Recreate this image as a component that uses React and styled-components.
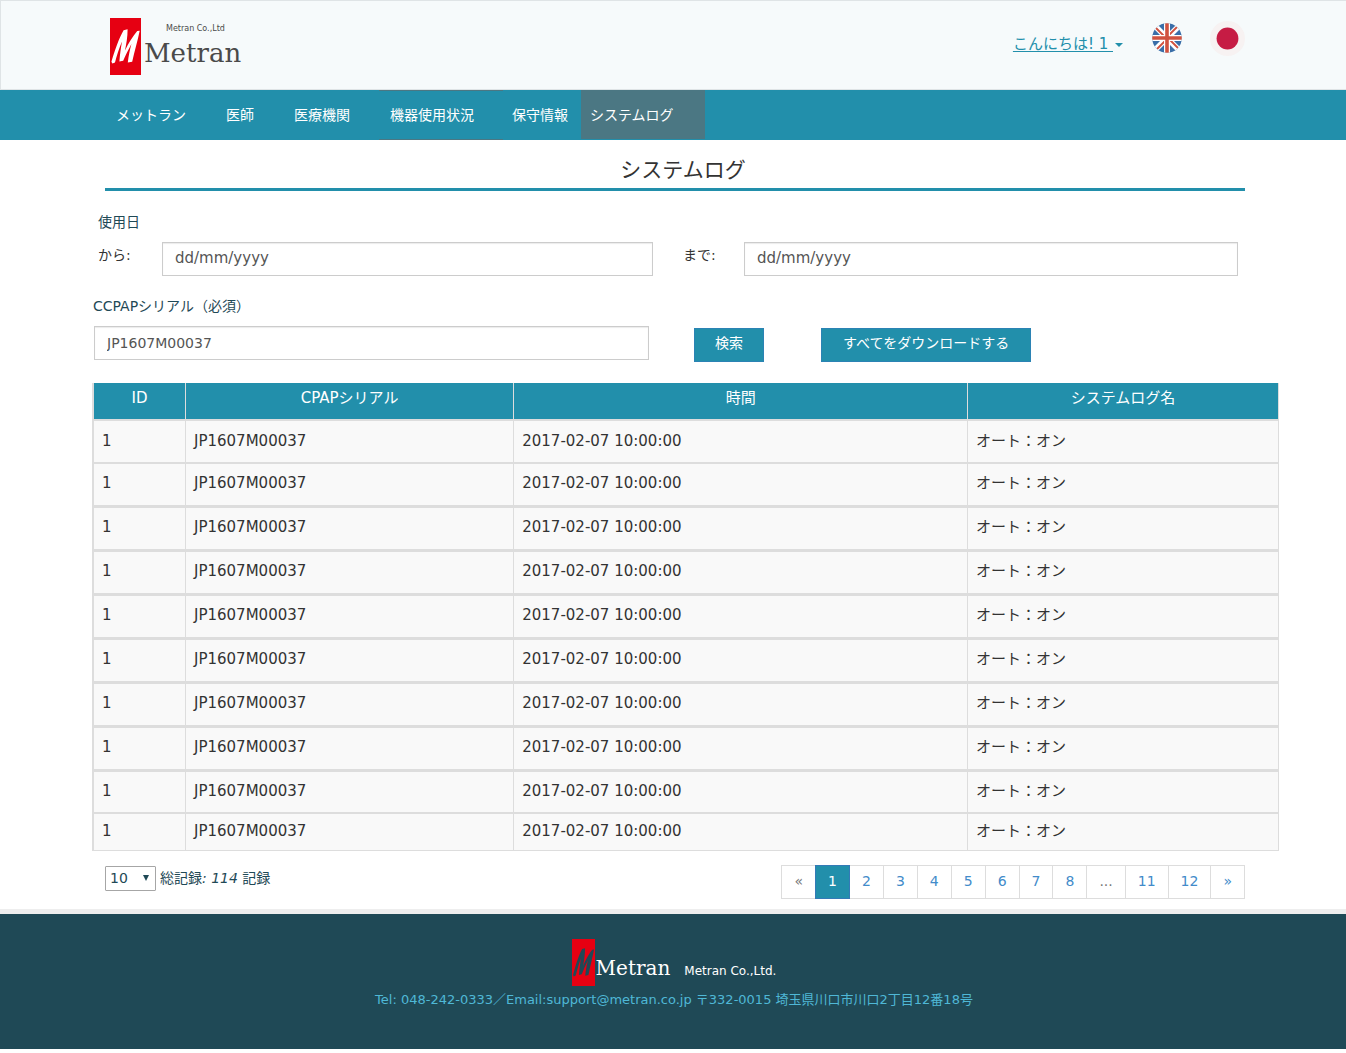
import React, { useState } from "react";
import styled, { createGlobalStyle } from "styled-components";

const teal = "#228fab";
const slate = "#4b7783";
const deep = "#1f4956";
const line = "#dddddd";

const GlobalStyle = createGlobalStyle`
  *, *::before, *::after { box-sizing: border-box; }
  body {
    margin: 0;
    background: #fff;
    color: ${deep};
    font: 14px/20px "DejaVu Sans", "Noto Sans CJK JP", sans-serif;
  }
  button, input, select { font: inherit; }
`;

const Header = styled.header`
  display: flex;
  justify-content: space-between;
  align-items: flex-start;
  padding: 17px 101px 14px 109px;
  background: #f6fafb;
  border: 1px solid #dfe4e6;
  border-right: 0;
`;

const Brand = styled.a`
  display: flex;
  gap: 3px;
  text-decoration: none;
  color: #4a4a4a;
`;

const BrandText = styled.span`
  display: flex;
  flex-direction: column;
  padding-top: 4px;
`;

const BrandCompany = styled.small`
  font-size: 8px;
  line-height: 14px;
  padding-left: 22px;
`;

const Wordmark = styled.span`
  font-family: "DejaVu Serif", serif;
  font-size: ${(p) => p.$size}px;
  line-height: 34px;
`;

const Account = styled.div`
  display: flex;
  align-items: center;
  height: 40px;
`;

const Greeting = styled.a`
  display: flex;
  align-items: center;
  gap: 2px;
  margin: 12px 29px 0 0;
  font-size: 15px;
  line-height: 22px;
  color: ${teal};
  text-decoration: none;
  span { text-decoration: underline; white-space: pre; text-underline-offset: 2px; }
`;

const Caret = styled.i`
  margin-top: 2px;
  border: 4px solid transparent;
  border-top-color: currentColor;
  border-bottom: 0;
`;

const Flag = styled.button`
  display: flex;
  padding: 0;
  border: 0;
  background: none;
  & + & { margin-left: 28px; }
`;

const Nav = styled.nav`
  display: flex;
  padding: 0 101px 0 105px;
  background: ${teal};
`;

const NavItem = styled.a`
  padding: 14px ${(p) => p.$right}px 14px ${(p) => p.$left}px;
  border: 1px solid ${(p) => (p.$state ? slate : teal)};
  border-width: 1px 0;
  margin-bottom: ${(p) => (p.$state === "active" ? 1 : 0)}px;
  padding-bottom: ${(p) => (p.$state === "active" ? 13 : 14)}px;
  background: ${(p) => (p.$state === "active" ? slate : teal)};
  color: #fff;
  text-decoration: none;
  white-space: nowrap;
`;

const Main = styled.main`
  padding: 15px 101px 10px 105px;
`;

const Title = styled.h1`
  margin: 0 0 21px;
  padding: 0 0 3px 16px;
  border-bottom: 3px solid ${teal};
  color: #333;
  font-size: 21px;
  font-weight: 400;
  line-height: 30px;
  text-align: center;
`;

const DateRange = styled.fieldset`
  display: flex;
  gap: 30px;
  min-width: 0;
  margin: 0 7px 20px -7px;
  padding: 0;
  border: 0;
`;

const Legend = styled.legend`
  padding: 0;
  margin-bottom: 10px;
`;

const DateField = styled.label`
  display: flex;
  flex: 1;
  color: #333;
`;

const DateLabel = styled.span`
  flex: none;
  width: ${(p) => p.$width}px;
  padding-top: 3px;
`;

const TextBox = styled.input`
  flex: 1;
  min-width: 0;
  width: 100%;
  height: 34px;
  padding: 6px 12px;
  border: 1px solid #ccc;
  box-shadow: inset 0 1px 1px rgba(0, 0, 0, 0.08);
  border-radius: 0;
  background: #fff;
  color: #555;
  font-size: 14px;
  &::placeholder { color: #555; opacity: 1; }
`;

const DateBox = styled(TextBox)`
  padding: 5px 12px 7px;
  font-size: 15px;
`;

const Wide = styled.div`
  margin: 0 -34px 0 -13px;
`;

const SearchLabel = styled.label`
  display: block;
  padding-left: 1px;
  margin-bottom: 10px;
`;

const SearchRow = styled.form`
  display: flex;
  align-items: flex-end;
  padding-left: 2px;
  margin-bottom: 21px;
`;

const SerialBox = styled.div`
  flex: 0 1 555px;
  padding-bottom: 2px;
  display: flex;
`;

const Button = styled.button`
  height: 34px;
  margin-left: ${(p) => p.$gap}px;
  padding: 4px ${(p) => p.$pad}px 8px;
  border: 1px solid #2b83b4;
  background: ${teal};
  color: #fff;
  white-space: nowrap;
`;

const Table = styled.table`
  width: 100%;
  table-layout: fixed;
  border-collapse: separate;
  border-spacing: 0;
  border-left: 2px solid ${line};
  color: #333;
  font-size: 15px;
  line-height: 22px;
`;

const Th = styled.th`
  width: ${(p) => p.$width};
  height: 38px;
  padding: 4px 8px 0;
  border: solid ${line};
  border-width: 0 1px 2px 0;
  background: ${teal};
  color: #fff;
  font-weight: 400;
  vertical-align: top;
`;

const Td = styled.td`
  height: 44px;
  padding: 8px 8px 0;
  border: solid ${line};
  border-width: 0 1px 3px 0;
  background: #f9f9f9;
  vertical-align: top;

  tr:first-child & { height: 43px; padding-top: 9px; border-bottom-width: 2px; }
  tr:nth-last-child(2) & { height: 42px; border-bottom-width: 2px; }
  tr:last-child & { height: 37px; padding-top: 6px; border-bottom-width: 1px; }
`;

const TableFooter = styled.div`
  display: flex;
  justify-content: space-between;
  align-items: flex-start;
  margin-top: 14px;
`;

const Count = styled.div`
  display: flex;
  align-items: flex-start;
  gap: 4px;
  padding-top: 1px;
`;

const CountText = styled.span`
  line-height: 24px;
`;

const SelectWrap = styled.span`
  position: relative;
  display: flex;
  svg { position: absolute; right: 7px; top: 9px; pointer-events: none; }
`;

const Select = styled.select`
  width: 51px;
  height: 25px;
  padding: 0 4px 2px;
  border: 1px solid #a6a6a6;
  border-radius: 1px;
  appearance: none;
  background: #fff;
  color: ${deep};
`;

const Pages = styled.ul`
  display: flex;
  margin: 0;
  padding: 0;
  list-style: none;
  li + li { margin-left: -1px; }
`;

const PageLink = styled.a`
  position: relative;
  z-index: ${(p) => (p.$active ? 1 : 0)};
  display: block;
  padding: 5px 12px 7px;
  border: 1px solid ${(p) => (p.$active ? "#337ab7" : line)};
  background: ${(p) => (p.$active ? teal : "#fff")};
  color: ${(p) => (p.$active ? "#fff" : p.$muted ? "#777" : "#428bca")};
  text-decoration: none;
`;

const Footer = styled.footer`
  display: flex;
  flex-direction: column;
  align-items: center;
  padding: 25px 0 39px;
  border-top: 5px solid #eee;
  background: ${deep};
`;

const FooterBrand = styled.div`
  display: flex;
  align-items: flex-start;
  gap: 1px;
  padding-left: 2px;
  color: #fff;
`;

const FooterWordmark = styled(Wordmark)`
  padding-top: 12px;
`;

const FooterCompany = styled.span`
  padding: 22px 0 0 13px;
  font-size: 12px;
`;

const Contact = styled.p`
  margin: 4px 0 0;
  padding-left: 2px;
  color: #4fb8d6;
  font-size: 13px;
`;

function LogoMark({ width, height, stroke }) {
  return (
    <svg width={width} height={height} viewBox="0 0 31 57" preserveAspectRatio="none" aria-hidden="true">
      <rect width="31" height="57" fill="#e60012" />
      <path
        d="M1.4 43.800 C4.500 33 9 20 13.600 12.200 L17.600 11.200 C17.600 19 16.300 26 15 32.500 C18.200 25.500 22.600 18.500 27.200 13 L29.700 12.800 C27.600 23 24.400 33.500 22.200 43.800 L17.800 44.600 C18.600 37.500 19.900 31.500 21.400 26 C18.500 31.500 15.600 37 13.200 42.800 L9.400 43.600 C9.900 36 11 29.500 12 23.500 C9 30.500 6.800 37.500 5 44.400 L2.400 45.400 Z"
        fill={stroke}
      />
    </svg>
  );
}

function UnitedKingdomFlag() {
  return (
    <svg width="30" height="30" viewBox="0 0 30 30" aria-hidden="true">
      <clipPath id="uk-round">
        <circle cx="15" cy="15" r="14.800" />
      </clipPath>
      <g clipPath="url(#uk-round)">
        <rect width="30" height="30" fill="#3a6ea8" />
        <path d="M2 2 28 28M28 2 2 28" stroke="#fff" strokeWidth="5.600" />
        <path d="M4 5 13 14M25 4 16 13M5 26 14 17M26 25 17 16" stroke="#d0523f" strokeWidth="1.800" />
        <path d="M15 0V30M0 15H30" stroke="#fff" strokeWidth="6" />
        <path d="M15 0V30M0 15H30" stroke="#d0523f" strokeWidth="3.600" />
      </g>
    </svg>
  );
}

function JapanFlag() {
  return (
    <svg width="35" height="35" viewBox="0 0 35 35" aria-hidden="true">
      <circle cx="17.500" cy="17.500" r="17.500" fill="#f7f2f2" />
      <circle cx="17.500" cy="17.500" r="10.900" fill="#c61c44" />
    </svg>
  );
}

const navItems = [
  { text: "メットラン", left: 11, right: 29 },
  { text: "医師", left: 11, right: 29 },
  { text: "医療機関", left: 11, right: 29 },
  { text: "機器使用状況", left: 11, right: 29, state: "open" },
  { text: "保守情報", left: 9, right: 13 },
  { text: "システムログ", left: 9, right: 31, state: "active" },
];

const columns = [
  { text: "ID", width: "92px" },
  { text: "CPAPシリアル", width: "27.7%" },
  { text: "時間", width: "38.3%" },
  { text: "システムログ名" },
];

const rows = Array.from({ length: 10 }, () => ["1", "JP1607M00037", "2017-02-07 10:00:00", "オート：オン"]);

const pages = ["«", "1", "2", "3", "4", "5", "6", "7", "8", "...", "11", "12", "»"];

export default function App() {
  const [serial, setSerial] = useState("JP1607M00037");
  const [from, setFrom] = useState("");
  const [to, setTo] = useState("");

  return (
    <>
      <GlobalStyle />
      <Header>
        <Brand href="#">
          <LogoMark width={31} height={57} stroke="#fff" />
          <BrandText>
            <BrandCompany>Metran Co.,Ltd</BrandCompany>
            <Wordmark $size={26}>Metran</Wordmark>
          </BrandText>
        </Brand>
        <Account>
          <Greeting href="#">
            <span>こんにちは! 1 </span>
            <Caret />
          </Greeting>
          <Flag type="button" aria-label="English">
            <UnitedKingdomFlag />
          </Flag>
          <Flag type="button" aria-label="日本語">
            <JapanFlag />
          </Flag>
        </Account>
      </Header>

      <Nav>
        {navItems.map((item) => (
          <NavItem key={item.text} href="#" $left={item.left} $right={item.right} $state={item.state}>
            {item.text}
          </NavItem>
        ))}
      </Nav>

      <Main>
        <Title>システムログ</Title>

        <DateRange>
          <Legend>使用日</Legend>
          <DateField>
            <DateLabel $width={64}>から:</DateLabel>
            <DateBox placeholder="dd/mm/yyyy" value={from} onChange={(e) => setFrom(e.target.value)} />
          </DateField>
          <DateField>
            <DateLabel $width={61}>まで:</DateLabel>
            <DateBox placeholder="dd/mm/yyyy" value={to} onChange={(e) => setTo(e.target.value)} />
          </DateField>
        </DateRange>

        <Wide>
          <SearchLabel htmlFor="serial">CCPAPシリアル（必須）</SearchLabel>
          <SearchRow onSubmit={(e) => e.preventDefault()}>
            <SerialBox>
              <TextBox id="serial" value={serial} onChange={(e) => setSerial(e.target.value)} />
            </SerialBox>
            <Button type="submit" $gap={45} $pad={20}>検索</Button>
            <Button type="button" $gap={57} $pad={21}>すべてをダウンロードする</Button>
          </SearchRow>

          <Table>
            <thead>
              <tr>
                {columns.map((c) => (
                  <Th key={c.text} scope="col" $width={c.width}>{c.text}</Th>
                ))}
              </tr>
            </thead>
            <tbody>
              {rows.map((row, i) => (
                <tr key={i}>
                  {row.map((cell) => (
                    <Td key={cell}>{cell}</Td>
                  ))}
                </tr>
              ))}
            </tbody>
          </Table>
        </Wide>

        <TableFooter>
          <Count>
            <SelectWrap>
              <Select aria-label="表示件数" defaultValue="10">
                <option>10</option>
                <option>20</option>
                <option>50</option>
              </Select>
              <svg width="6" height="6" viewBox="0 0 6 6" aria-hidden="true">
                <path d="M0 0H6L3 6Z" fill={deep} />
              </svg>
            </SelectWrap>
            <CountText>
              総記録<i>: 114</i> 記録
            </CountText>
          </Count>
          <Pages>
            {pages.map((p) => (
              <li key={p}>
                <PageLink href="#" $active={p === "1"} $muted={p === "«" || p === "..."}>{p}</PageLink>
              </li>
            ))}
          </Pages>
        </TableFooter>
      </Main>

      <Footer>
        <FooterBrand>
          <LogoMark width={23} height={47} stroke={deep} />
          <FooterWordmark $size={20}>Metran</FooterWordmark>
          <FooterCompany>Metran Co.,Ltd.</FooterCompany>
        </FooterBrand>
        <Contact>Tel: 048-242-0333／Email:support@metran.co.jp 〒332-0015 埼玉県川口市川口2丁目12番18号</Contact>
      </Footer>
    </>
  );
}
